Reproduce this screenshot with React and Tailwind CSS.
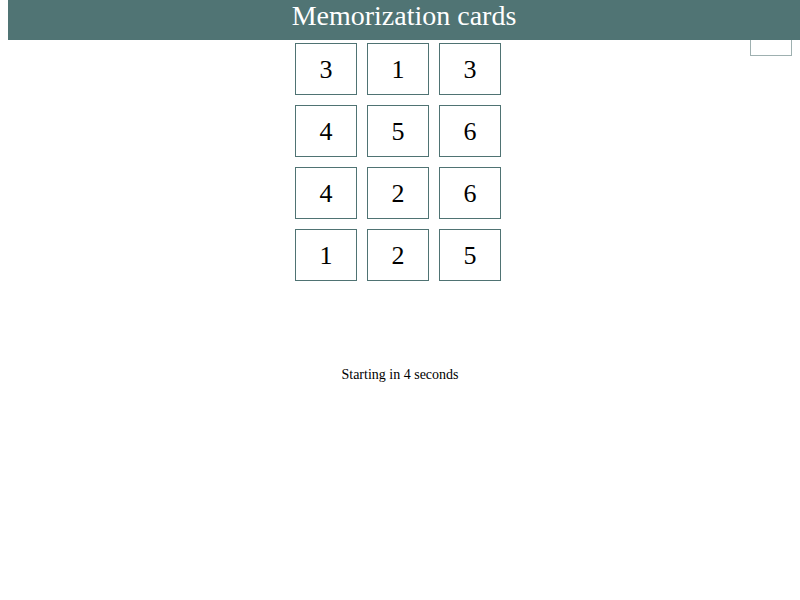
import React from "react";

const cards = [
  [3, 1, 3],
  [4, 5, 6],
  [4, 2, 6],
  [1, 2, 5],
];

export default function App() {
  return (
    <div
      className="relative w-[800px] h-[600px] bg-white text-black"
      style={{ fontFamily: '"Liberation Serif", "Times New Roman", serif' }}
    >
      {/* header */}
      <div className="relative z-10 ml-[8px] h-[40px] bg-[#507474] flex items-start justify-center">
        <h1 className="text-[28px] leading-[32px] text-white">Memorization cards</h1>
      </div>

      {/* stray button behind header */}
      <div className="absolute right-[8px] top-[16px] w-[42px] h-[40px] border border-[#9eb0b0] bg-white" />

      {/* cards */}
      <div className="flex justify-center pr-[4px] mt-[3px]">
        <div className="grid grid-cols-3 gap-[10px]">
          {cards.flat().map((n, i) => (
            <div
              key={i}
              className="w-[62px] h-[52px] border border-[#4f7373] flex items-center justify-center text-[26px]"
            >
              {n}
            </div>
          ))}
        </div>
      </div>

      <p className="mt-[83px] text-center text-[14px]">Starting in 4 seconds</p>
    </div>
  );
}
